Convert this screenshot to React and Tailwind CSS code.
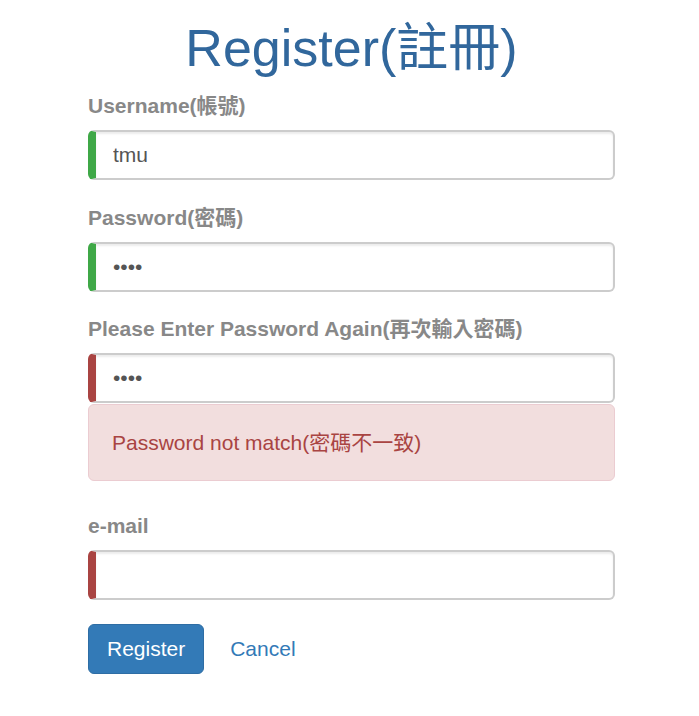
import React from "react";

const font = { fontFamily: '"Liberation Sans", "Noto Sans CJK TC", sans-serif' };

function Field({ label, value, type = "text", color }) {
  return (
    <div>
      <div className="h-[30px] leading-[30px] text-[21px] font-bold text-[#888888] mb-[9px]">{label}</div>
      <input
        readOnly
        type={type}
        defaultValue={value}
        className={`block w-full h-[50px] border-2 border-[#cccccc] border-l-8 ${color} rounded-[6px] pl-[17px] pr-3 text-[21px] text-[#555555] bg-white outline-none shadow-[inset_0_2px_2px_rgba(0,0,0,0.075)]`}
        style={font}
      />
    </div>
  );
}

export default function App() {
  return (
    <div className="bg-white w-[699px] h-[716px]" style={font}>
      <div className="ml-[88px] w-[527px] pt-[20px]">
        <h1 className="text-center text-[52px] leading-[57px] text-[#31679c] font-normal">Register(註冊)</h1>
        <div className="mt-[14px]">
          <Field label="Username(帳號)" value="tmu" color="border-l-[#3fa847]" />
        </div>
        <div className="mt-[23px]">
          <Field label="Password(密碼)" value="abcd" type="password" color="border-l-[#3fa847]" />
        </div>
        <div className="mt-[22px]">
          <Field label="Please Enter Password Again(再次輸入密碼)" value="abcd" type="password" color="border-l-[#a94442]" />
        </div>
        <div className="mt-[1px] h-[77px] bg-[#f2dede] border border-[#ebccd1] rounded-[6px] px-[23px] flex items-center text-[21px] leading-[30px] text-[#a94442]">
          Password not match(密碼不一致)
        </div>
        <div className="mt-[30px]">
          <Field label="e-mail" value="" color="border-l-[#a94442]" />
        </div>
        <div className="mt-[24px] flex items-center">
          <button className="h-[50px] px-[18px] bg-[#337ab7] border border-[#2e6da4] rounded-[6px] text-white text-[21px]" style={font}>
            Register
          </button>
          <span className="ml-[26px] text-[21px] text-[#337ab7]">Cancel</span>
        </div>
      </div>
    </div>
  );
}
